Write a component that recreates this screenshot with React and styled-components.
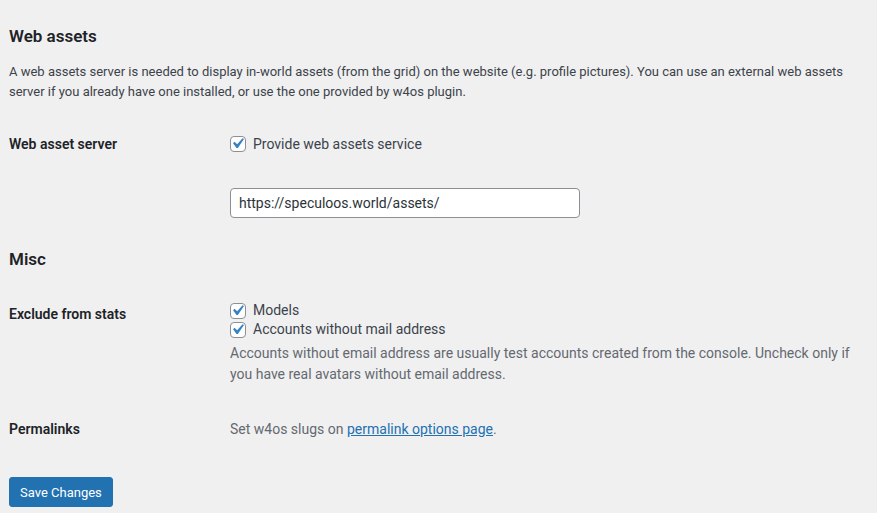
import React from 'react';
import styled, { createGlobalStyle } from 'styled-components';

const GlobalStyle = createGlobalStyle`
  html, body {
    margin: 0;
    padding: 0;
    background: #f0f0f1;
  }
  body {
    font-family: Roboto, "Noto Sans", "Liberation Sans", sans-serif;
    font-size: 13px;
    color: #3c434a;
  }
`;

const Wrap = styled.div`
  padding: 25px 14px 10px 9px;
`;

const Heading = styled.h2`
  margin: ${(p) => (p.first ? '0' : '15px')} 0 15px;
  font-size: 17px;
  line-height: 22px;
  font-weight: 600;
  color: #1d2327;
`;

const Intro = styled.p`
  margin: 0 0 13px;
  font-size: 13px;
  line-height: 20px;
`;

const Row = styled.div`
  display: grid;
  grid-template-columns: 211px 1fr;
`;

const Label = styled.div`
  padding: 20px 10px 20px 0;
  font-size: 14px;
  line-height: 18px;
  font-weight: 600;
  color: #1d2327;
`;

const Field = styled.div`
  padding: ${(p) => p.top || 15}px 10px 15px;
  font-size: 14px;
  line-height: 20px;
`;

const Fieldset = styled.div`
  padding-top: ${(p) => p.offset || 0}px;
`;

const CheckRow = styled.label`
  display: flex;
  align-items: center;
  gap: 7px;
  line-height: ${(p) => p.lh || 19}px;
  margin: ${(p) => p.m || 0}px 0;
  color: #3c434a;
`;

const Box = styled.span`
  position: relative;
  width: 16px;
  height: 16px;
  box-sizing: border-box;
  border: 1px solid #8c8f94;
  border-radius: 4px;
  background: #fff;
  flex: none;

  svg {
    position: absolute;
    left: -4px;
    top: -4px;
  }
`;

const TextInput = styled.input`
  width: 350px;
  height: 30px;
  box-sizing: border-box;
  padding: 0 8px;
  border: 1px solid #8c8f94;
  border-radius: 4px;
  background: #fff;
  font-family: inherit;
  font-size: 14px;
  color: #2c3338;
  outline: none;
`;

const Description = styled.p`
  margin: ${(p) => (p.flush ? 0 : 4)}px 0 0;
  font-size: 14px;
  line-height: 21px;
  color: #646970;
`;

const Link = styled.a`
  color: #2271b1;
  text-decoration: underline;
`;

const Submit = styled.p`
  margin: 19px 0 0;
`;

const Button = styled.button`
  height: 30px;
  padding: 0 10px;
  border: 1px solid #2271b1;
  border-radius: 3px;
  background: #2271b1;
  color: #fff;
  font-family: inherit;
  font-size: 13px;
  cursor: pointer;
`;

function Checkbox() {
  return (
    <Box>
      <svg width="21" height="21" viewBox="0 0 20 20">
        <path
          d="M14.83 4.89l1.34.94-5.81 8.38H9.02L5.78 9.67l1.34-1.25 2.57 2.4z"
          fill="#3582c4"
        />
      </svg>
    </Box>
  );
}

export default function App() {
  return (
    <>
      <GlobalStyle />
      <Wrap>
        <Heading first>Web assets</Heading>
        <Intro>
          A web assets server is needed to display in-world assets (from the grid) on the website (e.g. profile
          pictures). You can use an external web assets server if you already have one installed, or use the one
          provided by w4os plugin.
        </Intro>

        <Row>
          <Label>Web asset server</Label>
          <Field>
            <CheckRow lh={20} m={4}>
              <Checkbox />
              Provide web assets service
            </CheckRow>
          </Field>
        </Row>
        <Row>
          <Label />
          <Field>
            <TextInput defaultValue="https://speculoos.world/assets/" />
          </Field>
        </Row>

        <Heading>Misc</Heading>

        <Row>
          <Label>Exclude from stats</Label>
          <Field>
            <Fieldset offset={1}>
              <CheckRow>
                <Checkbox />
                Models
              </CheckRow>
              <CheckRow>
                <Checkbox />
                Accounts without mail address
              </CheckRow>
              <Description>
                Accounts without email address are usually test accounts created from the console. Uncheck only if
                you have real avatars without email address.
              </Description>
            </Fieldset>
          </Field>
        </Row>

        <Row>
          <Label>Permalinks</Label>
          <Field top={19}>
            <Description as="div" flush>
              Set w4os slugs on <Link href="#">permalink options page</Link>.
            </Description>
          </Field>
        </Row>

        <Submit>
          <Button>Save Changes</Button>
        </Submit>
      </Wrap>
    </>
  );
}
